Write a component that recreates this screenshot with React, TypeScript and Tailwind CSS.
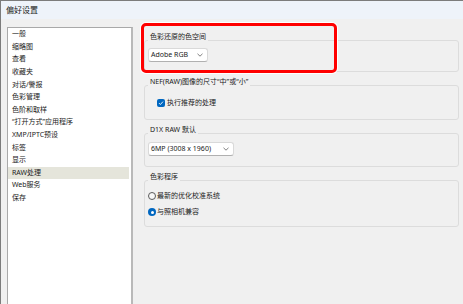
import React from "react";

const items = [
  "一般",
  "缩略图",
  "查看",
  "收藏夹",
  "对话/警报",
  "色彩管理",
  "色阶和取样",
  "\u201c打开方式\u201d应用程序",
  "XMP/IPTC预设",
  "标签",
  "显示",
  "RAW处理",
  "Web服务",
  "保存",
];

function Chevron() {
  return (
    <svg width="6" height="4" viewBox="0 0 6 4" fill="none">
      <path d="M0.5 0.8 L3 3.2 L5.5 0.8" stroke="#5f5f5f" strokeWidth="0.8" />
    </svg>
  );
}

function Dropdown({ text, w }: { text: string; w: string }) {
  return (
    <div
      className={`${w} h-[14px] bg-white border border-[#d9d9d9] border-b-[#b0b0b0] rounded-[3px] flex items-center justify-between pl-[2px] pr-[4px] text-[7px] leading-[12px] text-[#1b1b1b]`}
    >
      <span>{text}</span>
      <Chevron />
    </div>
  );
}

export default function App() {
  return (
    <div className="w-[463px] h-[304px] bg-[#f0f0f0] border-t border-l border-[#7c7c7c] overflow-hidden relative font-['Noto_Sans','Noto_Sans_CJK_SC',sans-serif] text-[#1b1b1b]">
      <div className="h-[18px] bg-[#eef3fa] flex items-center pl-[5px] text-[8px] leading-[10px] text-[#222]">
        偏好设置
      </div>
      <div className="flex pt-[8px]">
        <div className="ml-[6px] w-[126px] h-[280px] bg-white border border-[#a9a9a9] border-r-2 border-r-[#b9b9b9] pr-[2px] shrink-0">
          {items.map((t) => (
            <div
              key={t}
              className={`h-[12.6px] flex items-center pl-[4px] text-[7px] leading-[10px] ${
                t === "RAW处理" ? "bg-[#e5e5db]" : ""
              }`}
            >
              {t}
            </div>
          ))}
        </div>
        <div className="flex-1 pl-[11px] pr-[4px] pt-[6px] flex flex-col">
          <fieldset className="border border-[#dcdcdc] rounded-[3px] px-[3px] pb-[9px] m-0 min-w-0">
            <legend className="px-[2px] pb-[7px] leading-[8px] text-[7px]">色彩还原的色空间</legend>
            <Dropdown text="Adobe RGB" w="w-[60px]" />
          </fieldset>
          <fieldset className="mt-[5.5px] border border-[#dcdcdc] rounded-[3px] px-[3px] pb-[9px] m-0 min-w-0">
            <legend className="px-[2px] pb-[7px] leading-[8px] text-[7px]">
              NEF(RAW)图像的尺寸&ldquo;中&rdquo;或&ldquo;小&rdquo;
            </legend>
            <div className="mt-[3.5px] h-[14px] flex items-center ml-[9px] gap-[2px]">
              <div className="w-[8px] h-[8px] rounded-[2px] bg-[#0067c0] flex items-center justify-center">
                <svg width="6" height="6" viewBox="0 0 6 6" fill="none">
                  <path d="M1 3.1 L2.4 4.5 L5 1.6" stroke="#fff" strokeWidth="0.9" />
                </svg>
              </div>
              <span className="text-[7px] leading-[10px]">执行推荐的处理</span>
            </div>
          </fieldset>
          <fieldset className="mt-[6px] border border-[#dcdcdc] rounded-[3px] px-[3px] pb-[10px] m-0 min-w-0">
            <legend className="px-[2px] pb-[7px] leading-[8px] text-[7px]">D1X RAW 默认</legend>
            <div className="mt-[1px]">
              <Dropdown text="6MP (3008 x 1960)" w="w-[86px]" />
            </div>
          </fieldset>
          <fieldset className="mt-[6px] border border-[#dcdcdc] rounded-[3px] px-[3px] pb-[8px] m-0 min-w-0">
            <legend className="px-[2px] pb-[7px] leading-[8px] text-[7px]">色彩程序</legend>
            <div className="mt-[2px] h-[12px] flex items-center gap-[1px]">
              <div className="w-[8px] h-[8px] rounded-full border border-[#5a5a5a] bg-[#f7f7f7]" />
              <span className="text-[7px] leading-[10px]">最新的优化校准系统</span>
            </div>
            <div className="mt-[4px] h-[12px] flex items-center gap-[1px]">
              <div className="w-[8px] h-[8px] rounded-full bg-[#0067c0] flex items-center justify-center">
                <div className="w-[3px] h-[3px] rounded-full bg-white" />
              </div>
              <span className="text-[7px] leading-[10px]">与照相机兼容</span>
            </div>
          </fieldset>
        </div>
      </div>
      <div className="absolute left-[140px] top-[22px] w-[196px] h-[50px] border-[3px] border-[#ff0000] rounded-[5px] shadow-[0_0_0_1px_#ffffff]" />
    </div>
  );
}
